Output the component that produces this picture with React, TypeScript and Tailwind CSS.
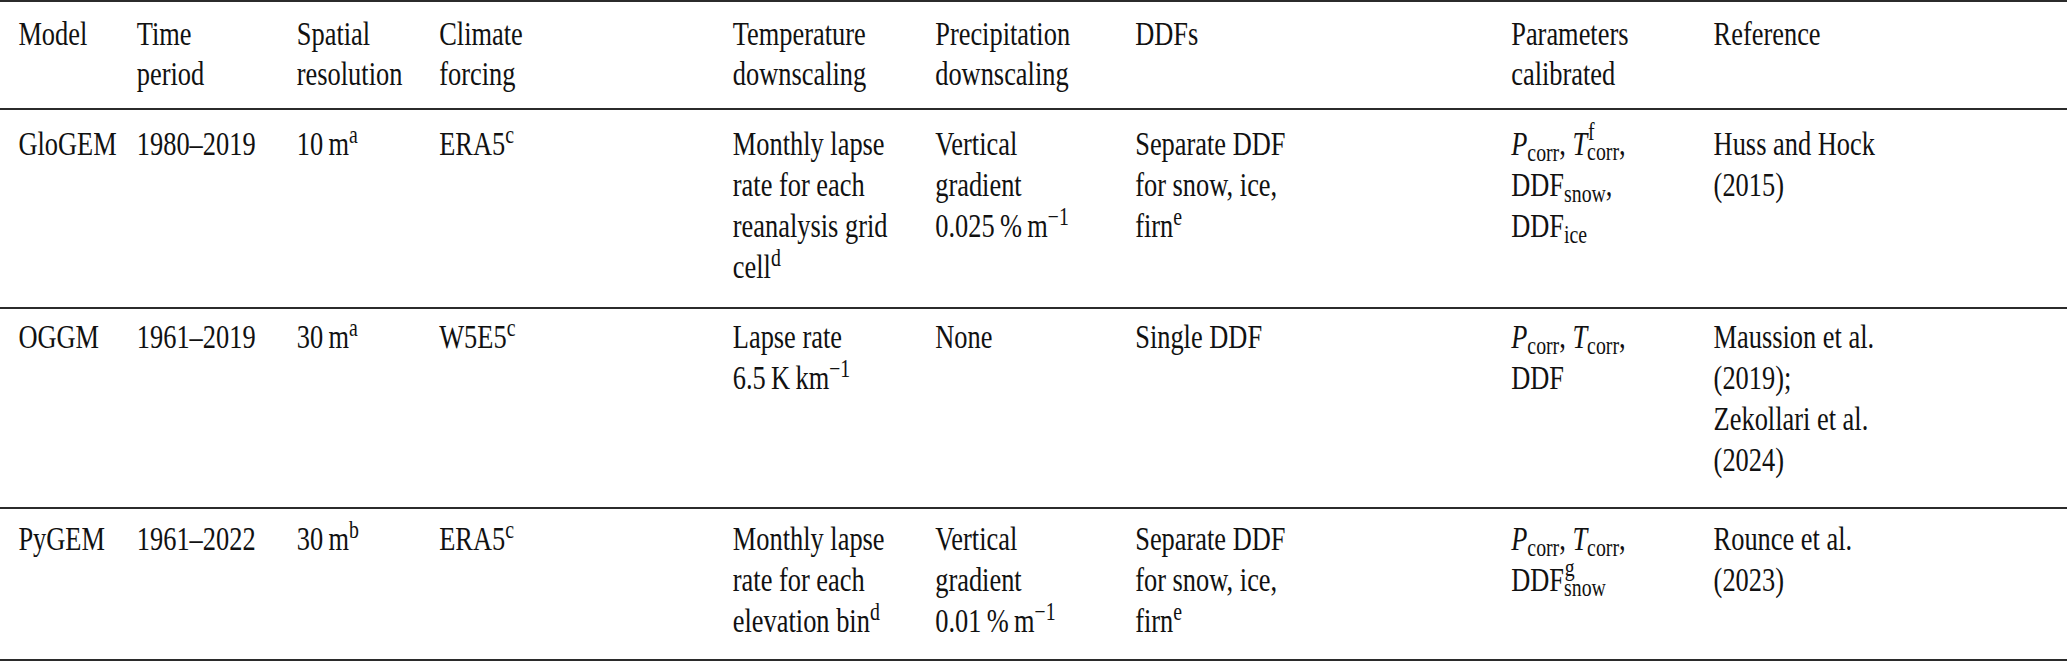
import type { ReactNode } from "react"

// stacked super/subscript, e.g. T^f_corr
function SubSup({ sup, sub }: { sup: string; sub: string }) {
  return (
    <span className="relative inline-block leading-none">
      <span className="relative top-[0.22em] text-[75%]">{sub}</span>
      <span className="absolute left-[1px] top-[-0.32em] text-[75%] leading-none">{sup}</span>
    </span>
  )
}

type Row = { pad: string; cells: ReactNode[][] }

const header: ReactNode[][] = [
  ["Model"],
  ["Time", "period"],
  ["Spatial", "resolution"],
  ["Climate", "forcing"],
  ["Temperature", "downscaling"],
  ["Precipitation", "downscaling"],
  ["DDFs"],
  ["Parameters", "calibrated"],
  ["Reference"],
]

const rows: Row[] = [
  {
    pad: "pt-[14px] pb-[19px]",
    cells: [
      ["GloGEM"],
      ["1980–2019"],
      [<>10{"\u2009"}m<sup>a</sup></>],
      [<>ERA5<sup>c</sup></>],
      ["Monthly lapse", "rate for each", "reanalysis grid", <>cell<sup>d</sup></>],
      ["Vertical", "gradient", <>0.025{"\u2009"}%{"\u2009"}m<sup>−1</sup></>],
      ["Separate DDF", "for snow, ice,", <>firn<sup>e</sup></>],
      [
        <><i>P</i><sub>corr</sub>, <i>T</i><SubSup sup="f" sub="corr" />,</>,
        <>DDF<sub>snow</sub>,</>,
        <>DDF<sub>ice</sub></>,
      ],
      ["Huss and Hock", "(2015)"],
    ],
  },
  {
    pad: "pt-[8px] pb-[26px]",
    cells: [
      ["OGGM"],
      ["1961–2019"],
      [<>30{"\u2009"}m<sup>a</sup></>],
      [<>W5E5<sup>c</sup></>],
      ["Lapse rate", <>6.5{"\u2009"}K{"\u2009"}km<sup>−1</sup></>],
      ["None"],
      ["Single DDF"],
      [<><i>P</i><sub>corr</sub>, <i>T</i><sub>corr</sub>,</>, "DDF"],
      ["Maussion et al.", "(2019);", "Zekollari et al.", "(2024)"],
    ],
  },
  {
    pad: "pt-[10px] pb-[17px] border-b-2",
    cells: [
      ["PyGEM"],
      ["1961–2022"],
      [<>30{"\u2009"}m<sup>b</sup></>],
      [<>ERA5<sup>c</sup></>],
      ["Monthly lapse", "rate for each", <>elevation bin<sup>d</sup></>],
      ["Vertical", "gradient", <>0.01{"\u2009"}%{"\u2009"}m<sup>−1</sup></>],
      ["Separate DDF", "for snow, ice,", <>firn<sup>e</sup></>],
      [<><i>P</i><sub>corr</sub>, <i>T</i><sub>corr</sub>,</>, <>DDF<SubSup sup="g" sub="snow" /></>],
      ["Rounce et al.", "(2023)"],
    ],
  },
]

const cols = "grid grid-cols-[148px_200px_178px_367px_253px_250px_470px_253px_1fr] pl-[23px]"

function Cells({ cells }: { cells: ReactNode[][] }) {
  return (
    <>
      {cells.map((lines, i) => (
        <div key={i} className="flex flex-col whitespace-nowrap">
          {lines.map((line, j) => (
            <span key={j}>{line}</span>
          ))}
        </div>
      ))}
    </>
  )
}

export default function App() {
  return (
    <div className="w-[2067px] h-[662px] overflow-hidden bg-white">
      <div
        className="w-[2584px] origin-left scale-x-[0.8] text-[33px] leading-[41px] text-[#111]"
        style={{ fontFamily: '"Liberation Serif", "Times New Roman", serif' }}
      >
        {/* header */}
        <div className={`${cols} border-t-2 border-[#2b2b2b] pt-[12px] pb-[14px] leading-[40px]`}>
          <Cells cells={header} />
        </div>

        {rows.map((row, i) => (
          <div key={i} className={`${cols} border-t-2 border-[#2b2b2b] ${row.pad}`}>
            <Cells cells={row.cells} />
          </div>
        ))}
      </div>
    </div>
  )
}
